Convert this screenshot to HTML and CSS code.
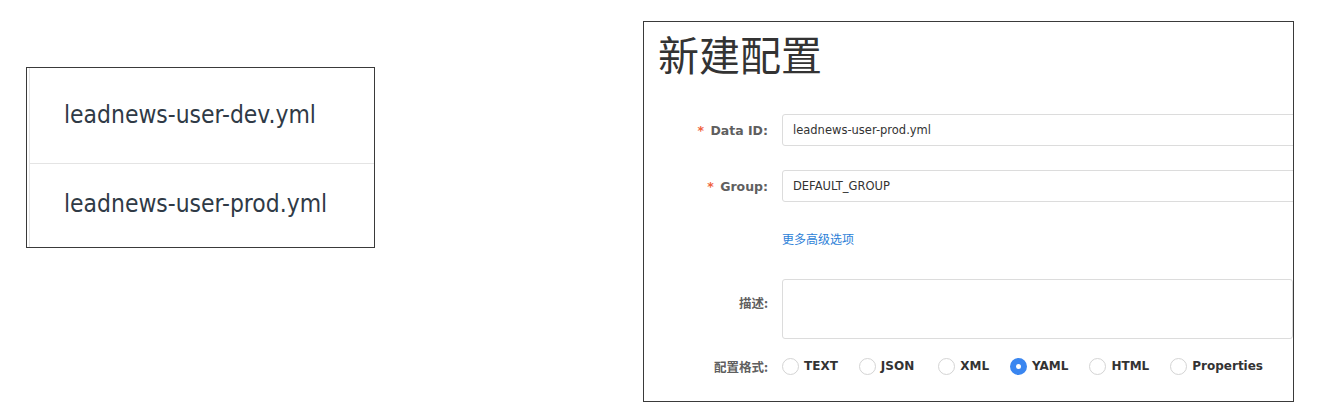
FILE: index.html
```html
<!DOCTYPE html>
<html lang="zh-CN">
<head>
<meta charset="utf-8">
<title>新建配置</title>
<link rel="stylesheet" href="styles.css">
</head>
<body>
<div class="page">
  <div class="list-panel">
    <div class="list-inner">
      <div class="list-row">leadnews-user-dev.yml</div>
      <div class="list-row">leadnews-user-prod.yml</div>
    </div>
  </div>

  <div class="form-panel">
    <h1 class="title">新建配置</h1>
    <div class="form">
      <div class="form-row">
        <label class="label"><span class="req">*</span> Data ID:</label>
        <div class="input">leadnews-user-prod.yml</div>
      </div>
      <div class="form-row row-group">
        <label class="label"><span class="req">*</span> Group:</label>
        <div class="input">DEFAULT_GROUP</div>
      </div>
      <div class="form-row row-link">
        <span class="label"></span>
        <a class="link">更多高级选项</a>
      </div>
      <div class="form-row row-desc">
        <label class="label label-desc">描述:</label>
        <div class="textarea"></div>
      </div>
      <div class="form-row row-radio">
        <label class="label">配置格式:</label>
        <div class="radios">
          <span class="radio"><span class="dot"></span>TEXT</span>
          <span class="radio radio-json"><span class="dot"></span>JSON</span>
          <span class="radio"><span class="dot"></span>XML</span>
          <span class="radio checked"><span class="dot"></span>YAML</span>
          <span class="radio"><span class="dot"></span>HTML</span>
          <span class="radio"><span class="dot"></span>Properties</span>
        </div>
      </div>
    </div>
  </div>
</div>
</body>
</html>
```

FILE: styles.css
```css
html, body {
  margin: 0;
  padding: 0;
  background: #fff;
}
body {
  width: 1325px;
  height: 418px;
  overflow: hidden;
  font-family: "DejaVu Sans", "Noto Sans CJK SC", sans-serif;
  color: #333;
}
.page {
  display: flex;
  align-items: flex-start;
}

/* left list */
.list-panel {
  margin-top: 67px;
  margin-left: 26px;
  width: 347px;
  height: 179px;
  border: 1px solid #3a3a3a;
  overflow: hidden;
  background: #fff;
}
.list-inner {
  margin-left: 2px;
  border-left: 1px solid #e4e4e4;
  height: 100%;
}
.list-row {
  height: 96px;
  box-sizing: border-box;
  display: flex;
  align-items: center;
  padding-left: 34px;
  padding-bottom: 3px;
  font-family: "DejaVu Sans Condensed", "DejaVu Sans", sans-serif;
  font-stretch: condensed;
  font-size: 24.4px;
  color: #2f3a46;
  border-bottom: 1px solid #e4e4e4;
}
.list-row + .list-row {
  height: 84px;
  padding-bottom: 4px;
}

/* right form */
.form-panel {
  margin-top: 21px;
  margin-left: 268px;
  width: 649px;
  height: 379px;
  border: 1px solid #3a3a3a;
  overflow: hidden;
  background: #fff;
}
.title {
  margin: 7px 0 0 14px;
  font-family: "Noto Sans CJK SC", sans-serif;
  font-weight: 400;
  font-size: 41px;
  line-height: 48px;
  color: #333;
}
.form {
  margin-top: 37px;
  display: flex;
  flex-direction: column;
}
.form-row {
  display: flex;
  align-items: center;
  column-gap: 14px;
}
.label {
  flex: 0 0 124px;
  text-align: right;
  font-family: "DejaVu Sans", "Noto Sans CJK SC", sans-serif;
  font-weight: 700;
  font-size: 12.5px;
  color: #5f5f5f;
  white-space: nowrap;
}
.req {
  color: #f0623c;
  margin-right: 2px;
}
.input {
  flex: 0 0 auto;
  width: 560px;
  height: 32px;
  box-sizing: border-box;
  border: 1px solid #dcdcdc;
  border-radius: 3px;
  padding-left: 10px;
  display: flex;
  align-items: center;
  font-size: 11.5px;
  color: #333;
}
.row-group {
  margin-top: 24px;
}
.row-link {
  margin-top: 20px;
  height: 32px;
}
.link {
  font-family: "Noto Sans CJK SC", sans-serif;
  font-size: 12px;
  color: #2d7fd8;
  cursor: pointer;
}
.row-desc {
  margin-top: 25px;
  align-items: flex-start;
}
.label-desc {
  padding-top: 14px;
  font-family: "Noto Sans CJK SC", sans-serif;
}
.textarea {
  width: 560px;
  height: 60px;
  box-sizing: border-box;
  border: 1px solid #dcdcdc;
  border-radius: 3px;
}
.row-radio {
  margin-top: 11px;
  height: 32px;
}
.row-radio .label {
  font-family: "Noto Sans CJK SC", sans-serif;
}
.radios {
  display: flex;
  align-items: center;
  column-gap: 21px;
}
.radio {
  display: inline-flex;
  align-items: center;
  column-gap: 5px;
  font-weight: 700;
  font-size: 12px;
  color: #333;
}
.radio-json {
  margin-right: 3px;
}
.dot {
  width: 17px;
  height: 17px;
  box-sizing: border-box;
  border: 1px solid #d4d4d4;
  border-radius: 50%;
  background: #fff;
}
.checked .dot {
  border: 6px solid #3a86f0;
  background: #fff;
}
```
